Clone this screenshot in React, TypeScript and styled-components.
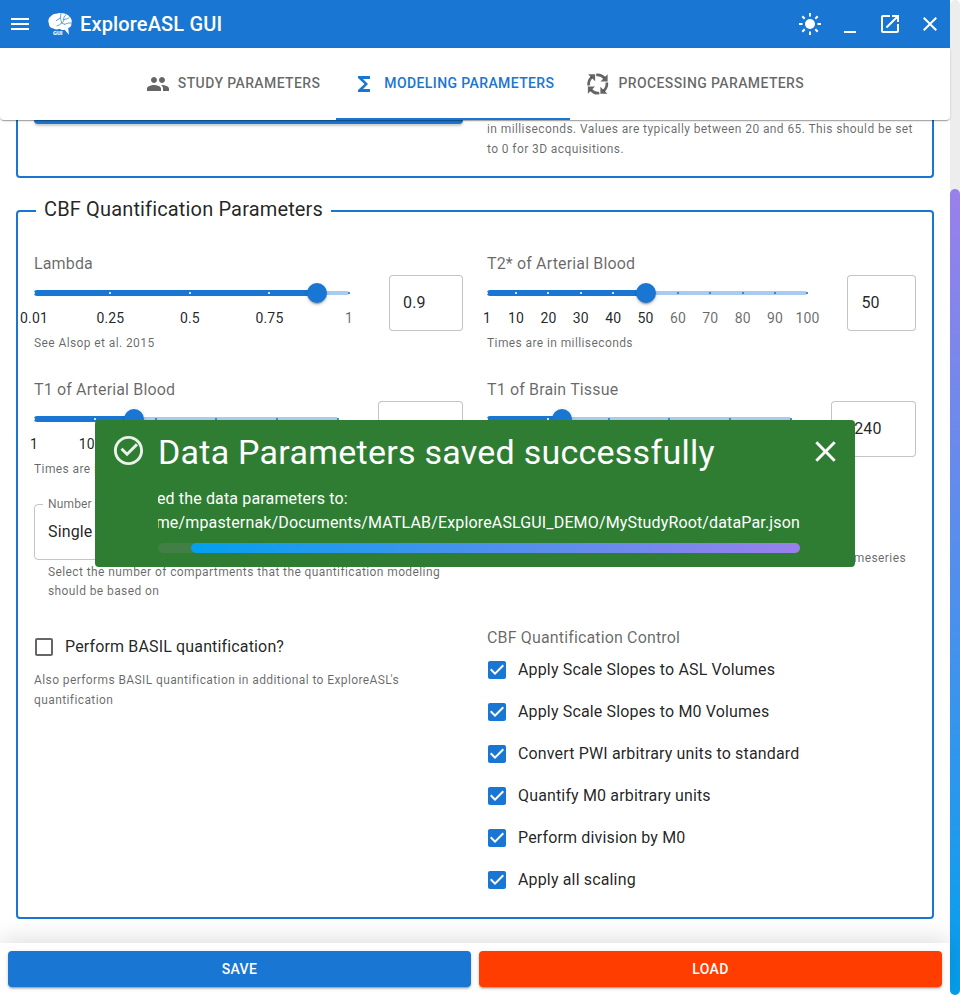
import React from "react";
import styled, { createGlobalStyle } from "styled-components";

const BLUE = "#1976d2";
const TEXT = "rgba(0,0,0,0.87)";
const MUTED = "rgba(0,0,0,0.6)";

const GlobalStyle = createGlobalStyle`
  *, *::before, *::after { box-sizing: border-box; }
  body { margin: 0; background: #fff; color: ${TEXT}; font: 400 16px/1.5 Roboto, "Liberation Sans", sans-serif; overflow: hidden; }
`;

const Window = styled.div`
  position: relative;
  display: flex;
  width: 960px;
  height: 995px;
  overflow: hidden;
`;
const Main = styled.div`
  width: 950px;
  display: flex;
  flex-direction: column;
`;
const ScrollTrack = styled.div`
  width: 10px;
  padding-top: 189px;
  border-radius: 5px;
  background: #ededed;
`;
const ScrollThumb = styled.div`
  height: 806px;
  border-radius: 5px;
  background: linear-gradient(#9a80eb, #02a0ee);
`;

const AppBar = styled.header`
  flex: none;
  height: 48px;
  display: flex;
  align-items: center;
  padding-left: 8px;
  background: ${BLUE};
  color: #fff;
`;
const Title = styled.h1`
  flex: 1;
  margin: 0 0 0 8px;
  font-size: 20px;
  font-weight: 500;
  line-height: 32px;
  letter-spacing: 0.15px;
`;
const Icon = styled.svg<{ $size?: number }>`
  flex: none;
  display: block;
  width: ${(p) => p.$size ?? 24}px;
  height: ${(p) => p.$size ?? 24}px;
  fill: currentColor;
`;
const Logo = styled(Icon)`
  margin-left: 16px;
`;
const WindowButton = styled.button`
  width: 40px;
  height: 40px;
  padding: 8px;
  border: 0;
  background: none;
  color: inherit;
`;

const Tabs = styled.nav`
  position: relative;
  z-index: 1;
  flex: none;
  height: 72px;
  display: flex;
  justify-content: center;
  background: #fff;
  border-radius: 0 0 4px 4px;
  box-shadow: 0 2px 1px -1px rgba(0,0,0,0.2), 0 1px 1px rgba(0,0,0,0.14), 0 1px 3px rgba(0,0,0,0.12);
`;
const Tab = styled.button<{ $active?: boolean }>`
  display: flex;
  align-items: center;
  gap: 8px;
  padding: 0 16px;
  border: 0;
  border-bottom: 2px solid ${(p) => (p.$active ? BLUE : "transparent")};
  border-top: 2px solid transparent;
  background: none;
  color: ${(p) => (p.$active ? BLUE : MUTED)};
  font: 500 14px/17px Roboto, sans-serif;
  letter-spacing: 0.388px;
  text-transform: uppercase;
`;
const TabText = styled.span`
  padding-bottom: 2px;
`;

const Content = styled.main`
  flex: 1;
  min-height: 0;
  padding: 0 16px;
  overflow: hidden;
`;
const PreviousSection = styled.section`
  display: grid;
  grid-template-columns: 429px 429px;
  column-gap: 24px;
  height: 58px;
  padding: 0 16px;
  border: 2px solid ${BLUE};
  border-top: 0;
  border-radius: 0 0 4px 4px;
`;
const ButtonEdge = styled.div`
  height: 4px;
  border-radius: 0 0 4px 4px;
  background: ${BLUE};
  box-shadow: 0 3px 1px -2px rgba(0,0,0,0.2), 0 2px 2px rgba(0,0,0,0.14), 0 1px 5px rgba(0,0,0,0.12);
`;
const Helper = styled.p<{ $top?: number; $indent?: number; $line?: number }>`
  margin: ${(p) => p.$top ?? 0}px 0 0 ${(p) => p.$indent ?? 0}px;
  font-size: 12px;
  line-height: ${(p) => p.$line ?? 20}px;
  letter-spacing: 0.4px;
  color: ${MUTED};
`;
const Kerned = styled.span`
  letter-spacing: -1.4px;
`;
const Section = styled.fieldset`
  margin: 19px 0 0;
  padding: 27px 16px 16px;
  border: 2px solid ${BLUE};
  border-radius: 4px;
  min-width: 0;
`;
const Legend = styled.legend`
  margin-left: 2px;
  padding: 0 8px 4px;
  font-size: 20px;
  line-height: 24px;
  letter-spacing: 0.15px;
`;
const Grid = styled.div`
  display: grid;
  grid-template-columns: 429px 429px;
  grid-template-rows: 126px 126px 122px auto;
  column-gap: 24px;
`;
const Cell = styled.div``;
const Label = styled.div`
  height: 23px;
  line-height: 23px;
  letter-spacing: 0.15px;
  color: ${MUTED};
`;
const FieldRow = styled.div`
  display: flex;
  gap: 40px;
  height: 56px;
`;
const SliderRoot = styled.div`
  position: relative;
  flex: 1;
  height: 30px;
  margin-top: 3px;
`;
const Rail = styled.div`
  position: absolute;
  top: 13px;
  width: 100%;
  height: 4px;
  border-radius: 2px;
  background: ${BLUE};
  opacity: 0.38;
`;
const Track = styled.div`
  position: absolute;
  top: 12px;
  height: 6px;
  border-radius: 3px;
  background: ${BLUE};
`;
const Mark = styled.i<{ $on: boolean }>`
  position: absolute;
  top: 14px;
  width: 2px;
  height: 2px;
  margin-left: -1px;
  background: ${(p) => (p.$on ? "#fff" : BLUE)};
  opacity: 0.8;
`;
const MarkLabel = styled.span<{ $on: boolean }>`
  position: absolute;
  top: 30px;
  transform: translateX(-50%);
  font-size: 14px;
  line-height: 20px;
  letter-spacing: 0.15px;
  color: ${(p) => (p.$on ? TEXT : MUTED)};
`;
const Thumb = styled.div`
  position: absolute;
  top: 5px;
  width: 20px;
  height: 20px;
  margin-left: -10px;
  border-radius: 50%;
  background: ${BLUE};
  box-shadow: 0 3px 1px -2px rgba(0,0,0,0.2), 0 2px 2px rgba(0,0,0,0.14), 0 1px 5px rgba(0,0,0,0.12);
`;
const NumberInput = styled.input<{ $width: number }>`
  width: ${(p) => p.$width}px;
  height: 56px;
  padding: 0 13px 2px;
  border: 1px solid rgba(0,0,0,0.23);
  border-radius: 4px;
  outline: 0;
  color: ${TEXT};
  font: 400 16px/23px Roboto, sans-serif;
  letter-spacing: 0.15px;
`;
const SelectBox = styled.fieldset`
  height: 63px;
  margin: -7px 0 0;
  padding: 8px 13px 0;
  border: 1px solid rgba(0,0,0,0.23);
  border-radius: 4px;
  line-height: 23px;
  letter-spacing: 0.15px;
`;
const SelectLegend = styled.legend`
  margin-left: -5px;
  padding: 0 5px;
  font-size: 12px;
  line-height: 15px;
  color: ${MUTED};
`;
const TrailingHelper = styled(Helper)`
  padding-right: 10px;
  text-align: right;
`;
const CheckRow = styled.label`
  display: flex;
  align-items: center;
  height: 42px;
  margin-left: -2px;
  gap: 9px;
  letter-spacing: 0.15px;
`;
const CheckText = styled.span`
  padding-bottom: 1px;
`;
const CheckIcon = styled(Icon)<{ $on: boolean }>`
  color: ${(p) => (p.$on ? BLUE : MUTED)};
`;

const Footer = styled.footer`
  position: relative;
  flex: none;
  height: 52px;
  display: flex;
  gap: 8px;
  padding: 8px;
  background: #fff;
  box-shadow: 0 -4px 24px rgba(0,0,0,0.13);
`;
const ActionButton = styled.button<{ $color: string }>`
  flex: 1;
  height: 36px;
  border: 0;
  border-radius: 4px;
  background: ${(p) => p.$color};
  color: #fff;
  font: 500 14px/24px Roboto, sans-serif;
  letter-spacing: 0.4px;
  box-shadow: 0 3px 1px -2px rgba(0,0,0,0.2), 0 2px 2px rgba(0,0,0,0.14), 0 1px 5px rgba(0,0,0,0.12);
`;

const Toast = styled.div`
  position: absolute;
  z-index: 5;
  left: 95px;
  top: 420px;
  width: 760px;
  height: 147px;
  display: flex;
  padding: 0 12px 0 16px;
  border-radius: 4px;
  background: #2e7d32;
  color: #fff;
`;
const ToastIcon = styled(Icon)`
  margin: 13px 12px 0 0;
  opacity: 0.9;
`;
const ToastBody = styled.div`
  width: 642px;
`;
const ToastTitle = styled.div`
  height: 67px;
  padding-top: 11px;
  font-size: 34px;
  line-height: 42px;
  letter-spacing: 0.25px;
  white-space: nowrap;
`;
const ToastMessage = styled.div`
  display: flex;
  justify-content: flex-end;
  overflow: hidden;
  line-height: 24px;
  letter-spacing: 0.15px;
  white-space: nowrap;
`;
const MessageLines = styled.div`
  flex: none;
`;
const Progress = styled.div`
  display: flex;
  justify-content: flex-end;
  height: 10px;
  margin-top: 8px;
  border-radius: 5px;
  background: #417f44;
`;
const ProgressFill = styled.div`
  height: 10px;
  border-radius: 5px;
  background: linear-gradient(135deg, #02a0ee, #9a80eb);
`;
const ToastClose = styled(Icon)`
  margin: 14px 0 0 8px;
`;

type Field = {
  label: string;
  help: string;
  min: number;
  max: number;
  value: number;
  marks: number[];
  inputWidth: number;
};

const fields: Field[] = [
  { label: "Lambda", help: "See Alsop et al. 2015", min: 0.01, max: 1, value: 0.9, marks: [0.01, 0.25, 0.5, 0.75, 1], inputWidth: 74 },
  { label: "T2* of Arterial Blood", help: "Times are in milliseconds", min: 1, max: 100, value: 50, marks: [1, 10, 20, 30, 40, 50, 60, 70, 80, 90, 100], inputWidth: 68.6 },
  { label: "T1 of Arterial Blood", help: "Times are in milliseconds", min: 1, max: 5000, value: 1650, marks: [1, 1000, 2000, 3000, 4000, 5000], inputWidth: 85 },
  { label: "T1 of Brain Tissue", help: "Times are in milliseconds", min: 1, max: 5000, value: 1240, marks: [1, 1000, 2000, 3000, 4000, 5000], inputWidth: 85 },
];

const controls = [
  "Apply Scale Slopes to ASL Volumes",
  "Apply Scale Slopes to M0 Volumes",
  "Convert PWI arbitrary units to standard",
  "Quantify M0 arbitrary units",
  "Perform division by M0",
  "Apply all scaling",
];

function SliderField({ label, help, min, max, value, marks, inputWidth }: Field) {
  const at = (v: number) => `${((v - min) / (max - min)) * 100}%`;
  return (
    <Cell>
      <Label>{label}</Label>
      <FieldRow>
        <SliderRoot>
          <Rail />
          <Track style={{ width: at(value) }} />
          {marks.map((m) => (
            <React.Fragment key={m}>
              <Mark $on={m <= value} style={{ left: at(m) }} />
              <MarkLabel $on={m <= value} style={{ left: at(m) }}>{m}</MarkLabel>
            </React.Fragment>
          ))}
          <Thumb style={{ left: at(value) }} />
        </SliderRoot>
        <NumberInput $width={inputWidth} defaultValue={value} />
      </FieldRow>
      <Helper $top={2}>{help}</Helper>
    </Cell>
  );
}

function Check({ on = false, children }: { on?: boolean; children: React.ReactNode }) {
  return (
    <CheckRow>
      <CheckIcon viewBox="0 0 24 24" $on={on}>
        {on ? (
          <path d="M19 3H5c-1.11 0-2 .9-2 2v14c0 1.1.89 2 2 2h14c1.11 0 2-.9 2-2V5c0-1.1-.89-2-2-2zm-9 14l-5-5 1.41-1.41L10 14.17l7.59-7.59L19 8l-9 9z" />
        ) : (
          <path d="M19 5v14H5V5h14m0-2H5c-1.1 0-2 .9-2 2v14c0 1.1.9 2 2 2h14c1.1 0 2-.9 2-2V5c0-1.1-.9-2-2-2z" />
        )}
      </CheckIcon>
      <CheckText>{children}</CheckText>
    </CheckRow>
  );
}

function BrainLogo() {
  return (
    <Logo viewBox="0 0 24 24">
      <path d="M8.200 1.700C10 .7 13 .8 15 1.200c3 .3 5.500 1.600 6.600 3.500 2.200 1.800 2.600 4.600 1.800 6.800.2 2.300-1.200 4-3.200 4.600l.8 6.600-4.400-5c-2 .8-3.700.2-4.900-1-2.200 1.200-4.700 1-6.200-.3C2.500 16 .7 14 .9 11.600-.3 8.600.6 5.600 3 4.200 4 2.500 6 1.500 8.200 1.700z" />
      <g fill="none" stroke="#1976d2" strokeWidth=".7" strokeLinecap="round">
        <path d="M13 1.500c-.8 2 .3 3-.8 4.600-1.200 1.400-3 1-4 2.600M12.200 6.200c1.200 1.400.8 3.300 1.400 4.600 1 1 2.200.8 3.200 1.400M18 2.800c-1.800 1.200-2.600 3-2.300 5 .3 1.500-.7 2.300-1.800 3M15.700 7.600c2.400-1 4-.2 5.600-2.200M23 11c-2.200-.6-3.800.5-6 1.200M13.600 11c-1 1.800-3 2-4.600 2.800" />
      </g>
      <text x="5" y="22.800" fontFamily="Roboto, sans-serif" fontSize="5.200" fontWeight="900" textLength="9.500" lengthAdjust="spacingAndGlyphs">GUI</text>
    </Logo>
  );
}

function CycleIcon() {
  return (
    <Icon viewBox="0 0 24 24">
      {[0, 90, 180, 270].map((angle) => (
        <g key={angle} transform={`rotate(${angle} 11.75 12)`}>
          <path d="M10.200 3A9 9 0 0 1 18.400 6" fill="none" stroke="currentColor" strokeWidth="2.700" />
          <path d="M21.600 2.300v7.100h-7.100z" />
        </g>
      ))}
    </Icon>
  );
}

export default function App() {
  return (
    <Window>
      <GlobalStyle />
      <Main>
        <AppBar>
          <Icon viewBox="0 0 24 24"><path d="M3 18h18v-2H3v2zm0-5h18v-2H3v2zm0-7v2h18V6H3z" /></Icon>
          <BrainLogo />
          <Title>ExploreASL GUI</Title>
          <WindowButton aria-label="Theme">
            <Icon viewBox="0 0 24 24">
              <circle cx="12" cy="12" r="5" />
              <path d="M12 1v3.500M12 19.500V23M1 12h3.500M19.500 12H23M4.300 4.300l2.400 2.400M17.300 17.300l2.400 2.400M4.300 19.700l2.400-2.400M17.300 6.700l2.400-2.400" stroke="currentColor" strokeWidth="2" />
            </Icon>
          </WindowButton>
          <WindowButton aria-label="Minimize">
            <Icon viewBox="0 0 24 24"><path d="M6 19h12v2H6z" /></Icon>
          </WindowButton>
          <WindowButton aria-label="Maximize">
            <Icon viewBox="0 0 24 24"><path d="M19 19H5V5h7V3H5c-1.110 0-2 .9-2 2v14c0 1.100.890 2 2 2h14c1.100 0 2-.9 2-2v-7h-2v7zM14 3v2h3.590l-9.830 9.830 1.410 1.410L19 6.410V10h2V3h-7z" /></Icon>
          </WindowButton>
          <WindowButton aria-label="Close">
            <Icon viewBox="0 0 24 24"><path d="M19 6.410L17.590 5 12 10.590 6.410 5 5 6.410 10.590 12 5 17.590 6.410 19 12 13.410 17.590 19 19 17.590 13.410 12z" /></Icon>
          </WindowButton>
        </AppBar>
        <Tabs>
          <Tab>
            <Icon viewBox="0 0 24 24"><path d="M16 11c1.660 0 2.990-1.340 2.990-3S17.660 5 16 5c-1.660 0-3 1.340-3 3s1.340 3 3 3zm-8 0c1.660 0 2.990-1.340 2.990-3S9.660 5 8 5C6.340 5 5 6.340 5 8s1.340 3 3 3zm0 2c-2.330 0-7 1.170-7 3.500V19h14v-2.500c0-2.330-4.670-3.500-7-3.500zm8 0c-.290 0-.620.020-.970.050 1.160.840 1.970 1.970 1.970 3.450V19h6v-2.500c0-2.330-4.670-3.500-7-3.500z" /></Icon>
            <TabText>Study Parameters</TabText>
          </Tab>
          <Tab $active>
            <Icon viewBox="0 0 24 24"><path d="M18 4H6v2l6.500 6L6 18v2h12v-3h-7l5-5-5-5h7z" /></Icon>
            <TabText>Modeling Parameters</TabText>
          </Tab>
          <Tab>
            <CycleIcon />
            <TabText>Processing Parameters</TabText>
          </Tab>
        </Tabs>
        <Content>
          <PreviousSection>
            <ButtonEdge />
            <Helper $top={-1}>
              in milliseconds. Values are typically between 20 and 65. This should be set to 0 for 3D acquisitions.
            </Helper>
          </PreviousSection>
          <Section>
            <Legend>CBF Quantification Parameters</Legend>
            <Grid>
              {fields.map((f) => <SliderField key={f.label} {...f} />)}
              <Cell>
                <SelectBox>
                  <SelectLegend>Number of Compartments</SelectLegend>
                  Single Compartment
                </SelectBox>
                <Helper $top={3} $indent={14} $line={19}>
                  Select the number of compartments that the quantification modeling should be based on
                </Helper>
              </Cell>
              <Cell>
                <TrailingHelper $top={44}>timeseries</TrailingHelper>
              </Cell>
              <Cell>
                <Check>Perform BASIL quantification?</Check>
                <Helper $top={2}>
                  Also performs BASIL quantification in additional to ExploreAS<Kerned>L</Kerned>'s quantification
                </Helper>
              </Cell>
              <Cell>
                <Label>CBF Quantification Control</Label>
                {controls.map((c) => <Check key={c} on>{c}</Check>)}
              </Cell>
            </Grid>
          </Section>
        </Content>
        <Footer>
          <ActionButton $color={BLUE}>SAVE</ActionButton>
          <ActionButton $color="#ff3d00">LOAD</ActionButton>
        </Footer>
      </Main>
      <ScrollTrack><ScrollThumb /></ScrollTrack>
      <Toast>
        <ToastIcon viewBox="0 0 24 24" $size={35}>
          <path d="M20,12A8,8 0 0,1 12,20A8,8 0 0,1 4,12A8,8 0 0,1 12,4C12.760,4 13.500,4.110 14.200,4.310L15.770,2.740C14.610,2.260 13.340,2 12,2A10,10 0 0,0 2,12A10,10 0 0,0 12,22A10,10 0 0,0 22,12A10,10 0 0,0 15.770,2.740L14.200,4.310A8,8 0 0,1 20,12M7.910,10.080L6.500,11.500L11,16L18.500,8.500L17.090,7.080L11,13.170L7.910,10.080Z" />
        </ToastIcon>
        <ToastBody>
          <ToastTitle>Data Parameters saved successfully</ToastTitle>
          <ToastMessage>
            <MessageLines>
              <div>Saved the data parameters to:</div>
              <div>/home/mpasternak/Documents/MATLAB/ExploreASLGUI_DEMO/MyStudyRoot/dataPar.json</div>
            </MessageLines>
          </ToastMessage>
          <Progress><ProgressFill style={{ width: "94.8%" }} /></Progress>
        </ToastBody>
        <ToastClose viewBox="0 0 24 24" $size={35}>
          <path d="M19 6.410L17.590 5 12 10.590 6.410 5 5 6.410 10.590 12 5 17.590 6.410 19 12 13.410 17.590 19 19 17.590 13.410 12z" />
        </ToastClose>
      </Toast>
    </Window>
  );
}
